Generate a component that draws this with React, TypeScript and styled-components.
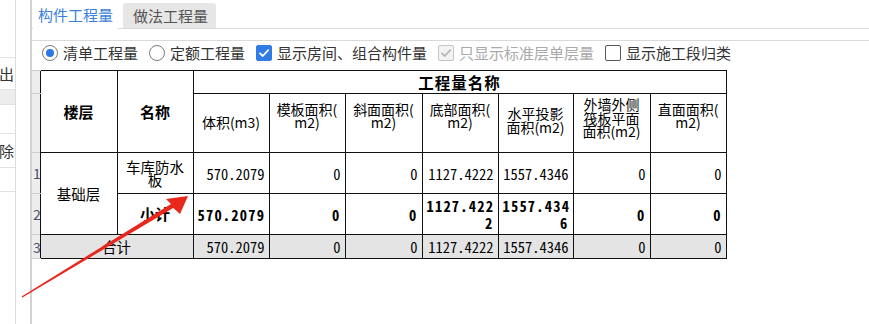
import React from "react";
import styled, { createGlobalStyle, css } from "styled-components";

const GlobalStyle = createGlobalStyle`
  html, body { margin: 0; padding: 0; background: #ffffff; }
  body { font-family: "Noto Sans CJK SC", "Noto Sans", sans-serif; }
`;

const Page = styled.div`
  position: relative;
  width: 869px;
  height: 324px;
  overflow: hidden;
  display: flex;
  background: #fff;
`;

const SidePanel = styled.div`
  flex: none;
  width: 15px;
  border-right: 1px solid #dcdcdc;
  display: flex;
  flex-direction: column;
`;

const SideList = styled.div`
  margin-top: 57px;
  border-top: 1px solid #e2e2e2;
  display: flex;
  flex-direction: column;
`;

const SideRow = styled.div<{ $h: number; $shade?: boolean }>`
  height: ${(p) => p.$h}px;
  border-bottom: 1px solid #e2e2e2;
  background: ${(p) => (p.$shade ? "#ededed" : "#fff")};
  display: flex;
  align-items: center;
  justify-content: flex-end;
  overflow: hidden;
  padding-right: 1px;
  font-size: 15px;
  color: #333;
  white-space: nowrap;
`;

const SideText = styled.span`
  flex: none;
`;

const Main = styled.div`
  flex: 1;
  min-width: 0;
  margin-left: 14px;
  border-left: 2px solid #d2d2d2;
  display: flex;
  flex-direction: column;
`;

const TabBar = styled.div`
  height: 28px;
  border-bottom: 1px solid #d9d9d9;
  display: flex;
  align-items: flex-end;
  padding-left: 1px;
`;

const Tab = styled.div<{ $active?: boolean }>`
  font-size: 15px;
  display: flex;
  align-items: center;
  ${(p) =>
    p.$active
      ? css`
          width: 80px;
          height: 29px;
          margin-bottom: -1px;
          padding-left: 5px;
          background: #fff;
          color: #3b7fd9;
        `
      : css`
          width: 83px;
          height: 25px;
          margin-left: 5px;
          padding-left: 10px;
          background: #e6e6e6;
          border-radius: 3px 3px 0 0;
          color: #555;
        `}
`;

const Panel = styled.div`
  margin-top: 11px;
  border-top: 1px solid #d9d9d9;
  display: flex;
  flex-direction: column;
`;

const OptionsBar = styled.div`
  height: 23px;
  display: flex;
  align-items: center;
  padding-left: 10px;
`;

const Option = styled.label<{ $disabled?: boolean }>`
  display: flex;
  align-items: center;
  gap: 5px;
  margin-right: 11px;
  font-size: 15px;
  color: ${(p) => (p.$disabled ? "#a9a9a9" : "#333")};
  white-space: nowrap;
`;

const RadioMark = styled.span<{ $checked?: boolean }>`
  box-sizing: border-box;
  width: 16px;
  height: 16px;
  border-radius: 50%;
  border: 1px solid #7c7c7c;
  background: #fff;
  display: flex;
  align-items: center;
  justify-content: center;
  &::after {
    content: "";
    width: 8px;
    height: 8px;
    border-radius: 50%;
    background: ${(p) => (p.$checked ? "#2b79e4" : "transparent")};
  }
`;

const BoxMark = styled.span<{ $state: "on" | "off" | "disabled" }>`
  box-sizing: border-box;
  width: 16px;
  height: 16px;
  border-radius: 2px;
  display: flex;
  align-items: center;
  justify-content: center;
  ${(p) =>
    p.$state === "on"
      ? css`
          background: #2f7ce2;
          border: 1px solid #2f7ce2;
        `
      : p.$state === "disabled"
      ? css`
          background: #f3f3f3;
          border: 1px solid #c4c4c4;
        `
      : css`
          background: #fff;
          border: 1px solid #5a5a5a;
        `}
`;

const TableWrap = styled.div`
  margin-top: 6px;
`;

const Grid = styled.table`
  border-collapse: collapse;
  table-layout: fixed;
  width: 694px;
  font-family: "Noto Sans CJK SC", sans-serif;
  color: #000;
`;

const Row = styled.tr<{ $h: number }>`
  height: ${(p) => p.$h}px;
`;

const RowNum = styled.td`
  padding: 0 0 0 1px;
  background: #ededed;
  border-top: 1px solid #cdcdcd;
  border-bottom: 1px solid #cdcdcd;
  border-left: none;
  border-right: none;
  font-size: 14px;
  color: #47506c;
  overflow: hidden;
  white-space: nowrap;
  vertical-align: middle;
`;

const cellBase = css`
  border: 1px solid #111;
  padding: 0 4px;
  vertical-align: middle;
`;

const HeadCell = styled.th<{ $big?: boolean }>`
  ${cellBase};
  font-weight: 700;
  font-size: ${(p) => (p.$big ? "15.5px" : "15px")};
  letter-spacing: ${(p) => (p.$big ? "1px" : "0")};
  text-align: center;
`;

const SubHead = styled.th<{ $lift?: number }>`
  ${cellBase};
  font-weight: 400;
  font-size: 14px;
  line-height: 13.5px;
  text-align: center;
  white-space: nowrap;
  padding-bottom: ${(p) => p.$lift ?? 0}px;
`;

const HeadLine = styled.span`
  display: block;
`;

const NameCell = styled.td<{ $bold?: boolean; $total?: boolean }>`
  ${cellBase};
  font-size: ${(p) => (p.$bold ? "15px" : "14.5px")};
  font-weight: ${(p) => (p.$bold ? 700 : 400)};
  line-height: 13.5px;
  text-align: center;
  background: ${(p) => (p.$total ? "#e4e4e4" : "#fff")};
`;

const NumCell = styled.td<{ $bold?: boolean; $total?: boolean }>`
  ${cellBase};
  text-align: right;
  white-space: nowrap;
  font-size: 14.5px;
  font-feature-settings: "hwid" 1;
  font-weight: ${(p) => (p.$bold ? 700 : 400)};
  letter-spacing: ${(p) => (p.$bold ? "1.2px" : "0")};
  line-height: 17px;
  background: ${(p) => (p.$total ? "#e4e4e4" : "#fff")};
`;

const Overlay = styled.svg`
  position: absolute;
  left: 0;
  top: 0;
  pointer-events: none;
`;

const colWidths = [8, 77, 76, 76, 76, 77, 76, 75, 77, 76];

const CheckIcon = ({ color }: { color: string }) => (
  <svg width="12" height="12" viewBox="0 0 12 12">
    <path d="M2 6.3 L4.8 9 L10.2 3.2" fill="none" stroke={color} strokeWidth="1.8" strokeLinecap="round" strokeLinejoin="round" />
  </svg>
);

const row1 = ["570.2079", "0", "0", "1127.4222", "1557.4346", "0", "0"];
const row2: React.ReactNode[] = [
  "570.2079",
  "0",
  "0",
  <>1127.422<br />2</>,
  <>1557.434<br />6</>,
  "0",
  "0",
];

const subHeads: { lines: string[]; lift: number }[] = [
  { lines: ["体积(m3)"], lift: 0 },
  { lines: ["模板面积(", "m2)"], lift: 14 },
  { lines: ["斜面面积(", "m2)"], lift: 14 },
  { lines: ["底部面积(", "m2)"], lift: 14 },
  { lines: ["水平投影", "面积(m2)"], lift: 5 },
  { lines: ["外墙外侧", "筏板平面", "面积(m2)"], lift: 9 },
  { lines: ["直面面积(", "m2)"], lift: 14 },
];

export default function App() {
  return (
    <>
      <GlobalStyle />
      <Page>
        <SidePanel>
          <SideList>
            <SideRow $h={31}><SideText>导出</SideText></SideRow>
            <SideRow $h={14} $shade />
            <SideRow $h={28} />
            <SideRow $h={33}><SideText>删除</SideText></SideRow>
            <SideRow $h={23} />
          </SideList>
        </SidePanel>
        <Main>
          <TabBar>
            <Tab $active>构件工程量</Tab>
            <Tab>做法工程量</Tab>
          </TabBar>
          <Panel>
            <OptionsBar>
              <Option>
                <RadioMark $checked />
                清单工程量
              </Option>
              <Option>
                <RadioMark />
                定额工程量
              </Option>
              <Option>
                <BoxMark $state="on">
                  <CheckIcon color="#fff" />
                </BoxMark>
                显示房间、组合构件量
              </Option>
              <Option $disabled>
                <BoxMark $state="disabled">
                  <CheckIcon color="#b4b4b4" />
                </BoxMark>
                只显示标准层单层量
              </Option>
              <Option>
                <BoxMark $state="off" />
                显示施工段归类
              </Option>
            </OptionsBar>
            <TableWrap>
              <Grid>
                <colgroup>
                  {colWidths.map((w, i) => (
                    <col key={i} style={{ width: w }} />
                  ))}
                </colgroup>
                <thead>
                  <Row $h={23}>
                    <RowNum />
                    <HeadCell rowSpan={2}>楼层</HeadCell>
                    <HeadCell rowSpan={2}>名称</HeadCell>
                    <HeadCell colSpan={7} $big>工程量名称</HeadCell>
                  </Row>
                  <Row $h={59}>
                    <RowNum />
                    {subHeads.map((h, i) => (
                      <SubHead key={i} $lift={h.lift}>
                        {h.lines.map((l, j) => (
                          <HeadLine key={j}>{l}</HeadLine>
                        ))}
                      </SubHead>
                    ))}
                  </Row>
                </thead>
                <tbody>
                  <Row $h={41}>
                    <RowNum>1</RowNum>
                    <NameCell rowSpan={2}>基础层</NameCell>
                    <NameCell>
                      <HeadLine>车库防水</HeadLine>
                      <HeadLine>板</HeadLine>
                    </NameCell>
                    {row1.map((v, i) => (
                      <NumCell key={i}>{v}</NumCell>
                    ))}
                  </Row>
                  <Row $h={41}>
                    <RowNum>2</RowNum>
                    <NameCell $bold>小计</NameCell>
                    {row2.map((v, i) => (
                      <NumCell key={i} $bold>{v}</NumCell>
                    ))}
                  </Row>
                  <Row $h={24}>
                    <RowNum>3</RowNum>
                    <NameCell colSpan={2} $total>合计</NameCell>
                    {row1.map((v, i) => (
                      <NumCell key={i} $total>{v}</NumCell>
                    ))}
                  </Row>
                </tbody>
              </Grid>
            </TableWrap>
          </Panel>
        </Main>
        <Overlay width="869" height="324" viewBox="0 0 869 324">
          <polygon
            points="21.6,296.4 171,204 166,199 188,196 180,214 173.2,208 22.4,297.6"
            fill="#e8271d"
          />
        </Overlay>
      </Page>
    </>
  );
}
